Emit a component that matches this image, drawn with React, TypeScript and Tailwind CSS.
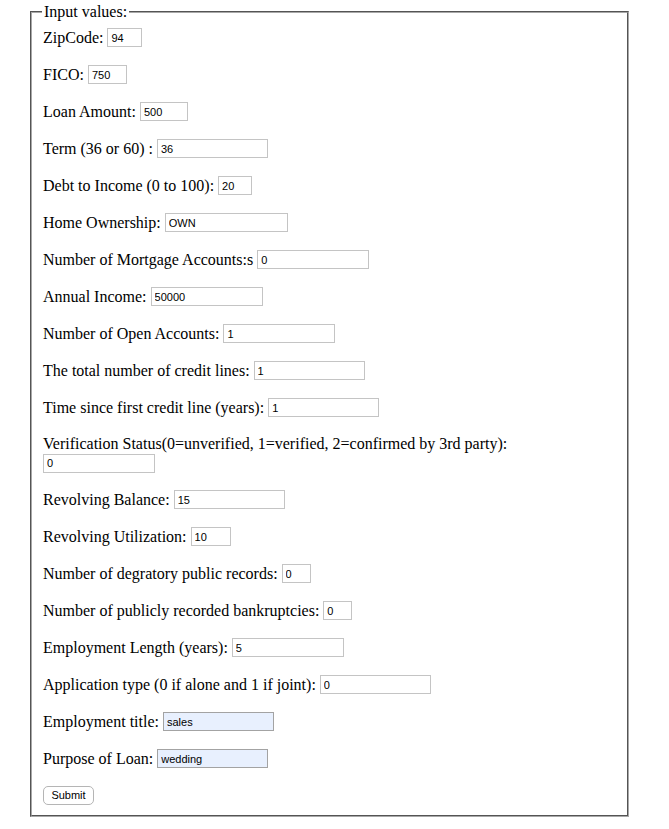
const fields: { label: string; value: string; width: number; auto?: boolean }[] = [
  { label: 'ZipCode:', value: '94', width: 35 },
  { label: 'FICO:', value: '750', width: 39 },
  { label: 'Loan Amount:', value: '500', width: 48 },
  { label: 'Term (36 or 60) :', value: '36', width: 111 },
  { label: 'Debt to Income (0 to 100):', value: '20', width: 34 },
  { label: 'Home Ownership:', value: 'OWN', width: 123 },
  { label: 'Number of Mortgage Accounts:s', value: '0', width: 112 },
  { label: 'Annual Income:', value: '50000', width: 112 },
  { label: 'Number of Open Accounts:', value: '1', width: 112 },
  { label: 'The total number of credit lines:', value: '1', width: 111 },
  { label: 'Time since first credit line (years):', value: '1', width: 111 },
]

const fieldsAfter: { label: string; value: string; width: number; auto?: boolean }[] = [
  { label: 'Revolving Balance:', value: '15', width: 111 },
  { label: 'Revolving Utilization:', value: '10', width: 40 },
  { label: 'Number of degratory public records:', value: '0', width: 29 },
  { label: 'Number of publicly recorded bankruptcies:', value: '0', width: 29 },
  { label: 'Employment Length (years):', value: '5', width: 112 },
  { label: 'Application type (0 if alone and 1 if joint):', value: '0', width: 111 },
  { label: 'Employment title:', value: 'sales', width: 111, auto: true },
  { label: 'Purpose of Loan:', value: 'wedding', width: 111, auto: true },
]

function Field({ value, width, auto }: { value: string; width: number; auto?: boolean }) {
  return (
    <input
      type="text"
      defaultValue={value}
      style={{ width }}
      className={
        'h-[19px] px-[3px] text-[11px] leading-[17px] text-black font-["Liberation_Sans",Arial,sans-serif] border outline-none ' +
        (auto ? 'bg-[#e8f0fe] border-[#a3a3a3]' : 'bg-white border-[#c4c4c4]')
      }
    />
  )
}

function Row({ label, value, width, auto }: { label: string; value: string; width: number; auto?: boolean }) {
  return (
    <div className="flex h-[21px] items-center">
      <span className="whitespace-pre">{label} </span>
      <Field value={value} width={width} auto={auto} />
    </div>
  )
}

export default function App() {
  return (
    <div className="min-h-screen bg-white pt-[3px] pl-[30px] font-['Liberation_Serif','Times_New_Roman',serif] text-[16px] leading-[21px] text-black">
      <form onSubmit={e => e.preventDefault()}>
        <fieldset className="w-[599px] border-2 border-[#a8a8a8] [border-style:groove] pl-[11px] pr-[12px] pt-[6px] pb-[9px]">
          <legend className="ml-[-1px] px-[2px] leading-[18px]">Input values:</legend>
          <div className="flex flex-col gap-[16px]">
            {fields.map(f => (
              <Row key={f.label} {...f} />
            ))}
            <div className="flex flex-col">
              <span className="h-[19px] leading-[19px]">
                Verification Status(0=unverified, 1=verified, 2=confirmed by 3rd party):
              </span>
              <div className="flex h-[20px] items-center">
                <Field value="0" width={112} />
              </div>
            </div>
            {fieldsAfter.map(f => (
              <Row key={f.label} {...f} />
            ))}
            <div className="flex h-[21px] items-center">
              <button
                type="submit"
                className="h-[19px] w-[51px] rounded-[5px] border border-[#b5b5b5] bg-white text-[11px] leading-[17px] text-black font-['Liberation_Sans',Arial,sans-serif]"
              >
                Submit
              </button>
            </div>
          </div>
        </fieldset>
      </form>
    </div>
  )
}
